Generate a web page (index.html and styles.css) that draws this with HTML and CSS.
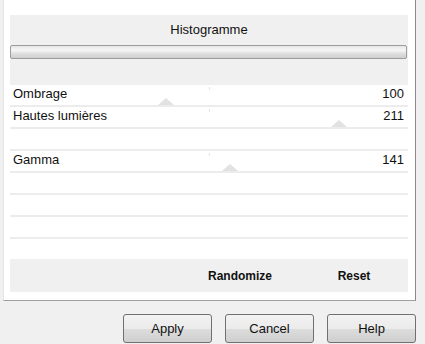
FILE: index.html
```
<!doctype html>
<html>
<head>
    <title>Histogramme</title>
    <meta charset="utf-8" />
    <link rel="stylesheet" href="styles.css">
</head>
<body>
<div class="panel">
    <div class="histo">
        <div class="histo-title">Histogramme</div>
        <div class="histo-bar"></div>
    </div>
    <div class="row">
        <span class="label">Ombrage</span><span class="value">100</span>
        <span class="tick"></span>
        <span class="thumb" style="left: 39.2%"></span>
    </div>
    <div class="row">
        <span class="label">Hautes lumières</span><span class="value">211</span>
        <span class="tick"></span>
        <span class="thumb" style="left: 82.7%"></span>
    </div>
    <div class="row"></div>
    <div class="row">
        <span class="label">Gamma</span><span class="value">141</span>
        <span class="tick"></span>
        <span class="thumb" style="left: 55.3%"></span>
    </div>
    <div class="row"></div>
    <div class="row"></div>
    <div class="row"></div>
    <div class="actions">
        <span class="action randomize">Randomize</span>
        <span class="action reset">Reset</span>
    </div>
</div>
<div class="footer">
    <button class="btn">Apply</button>
    <button class="btn">Cancel</button>
    <button class="btn">Help</button>
</div>
</body>
</html>
```
FILE: styles.css
```
html, body {
    margin: 0;
    padding: 0;
}
body {
    background: #f0f0f0;
    font-family: "Liberation Sans", Arial, sans-serif;
    font-size: 13px;
    color: #000;
    width: 425px;
    height: 344px;
    overflow: hidden;
}
.panel {
    margin-left: 3px;
    width: 398px;
    height: 285px;
    padding: 15px 7px 0 6px;
    background: #fff;
    border-left: 1px solid #e6e6e6;
    border-right: 1px solid #8a8a8a;
    border-bottom: 1px solid #a0a0a0;
    box-sizing: content-box;
}
.histo {
    background: #f0f0f0;
    height: 70px;
}
.histo-title {
    text-align: center;
    height: 30px;
    line-height: 30px;
    color: #111;
}
.histo-bar {
    height: 12px;
    border: 1px solid #9c9c9c;
    border-radius: 2px;
    background: linear-gradient(#e6e6e6, #f6f6f6 35%, #dedede 65%, #cfcfcf);
    margin-right: 1px;
}
.row {
    position: relative;
    height: 20px;
    border-bottom: 2px solid #ececec;
    display: flex;
    justify-content: space-between;
    line-height: 18px;
    padding: 0 4px 0 3px;
    color: #111;
}
.tick {
    position: absolute;
    left: 50%;
    top: 2px;
    width: 1px;
    height: 3px;
    background: #e4e4e4;
}
.thumb {
    position: absolute;
    bottom: 0;
    width: 0;
    height: 0;
    margin-left: -8px;
    border-left: 8px solid transparent;
    border-right: 8px solid transparent;
    border-bottom: 7px solid #e2e2e2;
}
.actions {
    margin-top: 20px;
    height: 33px;
    background: #f0f0f0;
    display: flex;
    justify-content: flex-end;
    align-items: center;
    font-size: 12px;
    font-weight: bold;
    color: #111;
}
.action {
    text-align: center;
}
.randomize {
    width: 100px;
    margin-right: 10px;
}
.reset {
    width: 108px;
}
.footer {
    display: flex;
    justify-content: flex-end;
    gap: 13px;
    padding: 13px 9px 0 0;
}
.btn {
    width: 89px;
    height: 29px;
    font-family: "Liberation Sans", Arial, sans-serif;
    font-size: 13px;
    color: #111;
    border: 1px solid #707070;
    border-radius: 3px;
    background: linear-gradient(#f2f2f2, #ebebeb 50%, #dddddd 51%, #cfcfcf);
    padding: 0;
}
```
